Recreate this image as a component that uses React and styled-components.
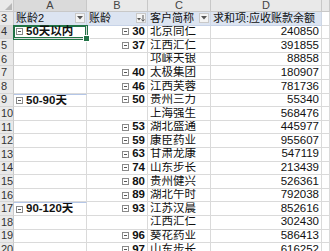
import React from 'react';
import styled, { createGlobalStyle, css } from 'styled-components';

const GlobalStyle = createGlobalStyle`
  html, body {
    margin: 0;
    padding: 0;
    background: #ffffff;
    overflow: hidden;
  }
  body {
    font-family: "Liberation Sans", "Noto Sans CJK SC", sans-serif;
  }
`;

const Sheet = styled.div`
  display: grid;
  grid-template-columns: 14px 73px 61px 63px 111px 1fr;
  grid-template-rows: 12px repeat(18, 13.6px);
  width: 330px;
  height: 251px;
  overflow: hidden;
`;

const Corner = styled.div`
  position: relative;
  background: #e9e9e9;
  border-right: 1px solid #c8c8c8;
  border-bottom: 1px solid #c8c8c8;
  box-sizing: border-box;

  &::after {
    content: '';
    position: absolute;
    right: 1px;
    bottom: 1px;
    border-left: 7px solid transparent;
    border-bottom: 7px solid #b8b8b8;
  }
`;

const ColHead = styled.div`
  display: flex;
  align-items: center;
  justify-content: center;
  background: ${p => (p.$active ? '#dadada' : '#e9e9e9')};
  border-right: 1px solid #c8c8c8;
  border-bottom: 1px solid #c8c8c8;
  box-sizing: border-box;
  font-size: 11px;
  color: #444;
  line-height: 1;
`;

const RowHead = styled.div`
  display: flex;
  align-items: center;
  padding-left: 1px;
  background: ${p => (p.$active ? '#dadada' : '#e9e9e9')};
  border-right: 1px solid #c8c8c8;
  border-bottom: 1px solid #d6d6d6;
  box-sizing: border-box;
  font-size: 11px;
  color: #333;
  line-height: 1;
  overflow: hidden;
`;

const Cell = styled.div`
  position: relative;
  display: flex;
  align-items: center;
  justify-content: ${p => (p.$right ? 'flex-end' : 'flex-start')};
  gap: 2px;
  padding: 0 2px;
  border-right: 1px solid #dadada;
  border-bottom: 1px solid #dadada;
  box-sizing: border-box;
  font-size: 11.5px;
  line-height: 1;
  color: #111;
  white-space: nowrap;
  overflow: hidden;
  font-weight: ${p => (p.$bold ? 700 : 400)};
  ${p => p.$group && css`
    border-top: 1px solid #b4c6e7;
  `}
  ${p => p.$selected && css`
    overflow: visible;
    z-index: 1;
    box-shadow: 0 0 0 1px #217346, inset 0 0 0 1px #217346;
    &::after {
      content: '';
      position: absolute;
      right: -4px;
      bottom: -4px;
      width: 5px;
      height: 5px;
      background: #217346;
      border: 1px solid #fff;
      z-index: 2;
    }
  `}
`;

const HeadCell = styled(Cell)`
  justify-content: space-between;
  background: #dce4f1;
  border-right-color: #cdd6e4;
  border-bottom: 1px solid #c7d3e8;
  padding-right: 1px;
  font-size: 11px;
`;

const Number = styled.span`
  font-size: 11.5px;
`;

const FilterButton = styled.span`
  flex: none;
  display: flex;
  align-items: center;
  justify-content: center;
  width: 10px;
  height: 10px;
  background: #f4f4f4;
  border: 1px solid #c9c9c9;
  box-sizing: border-box;
`;

const Collapse = styled.span`
  flex: none;
  display: flex;
  align-items: center;
  justify-content: center;
  width: 7px;
  height: 7px;
  border: 1px solid #8a8a8a;
  box-sizing: border-box;
  margin-right: 1px;

  &::before {
    content: '';
    width: 3px;
    height: 1px;
    background: #555;
  }
`;

function DropIcon() {
  return (
    <svg width="6" height="4" viewBox="0 0 6 4">
      <path d="M0 0h6L3 3.5z" fill="#555" />
    </svg>
  );
}

function SortIcon() {
  return (
    <svg width="8" height="7" viewBox="0 0 8 7">
      <path d="M0 3h4L2 5.5z" fill="#555" />
      <path d="M6 0v6M4.5 4.5L6 6.3 7.5 4.5" stroke="#555" strokeWidth="1" fill="none" />
    </svg>
  );
}

const rows = [
  { n: 4, a: '50天以内', b: '30', c: '北京同仁', d: '240850' },
  { n: 5, b: '37', c: '江西汇仁', d: '391855' },
  { n: 6, c: '邛崃天银', d: '88858' },
  { n: 7, b: '40', c: '太极集团', d: '180907' },
  { n: 8, b: '46', c: '江西芙蓉', d: '781736' },
  { n: 9, a: '50-90天', b: '50', c: '贵州三力', d: '55340' },
  { n: 10, c: '上海强生', d: '568476' },
  { n: 11, b: '53', c: '湖北盛通', d: '445977' },
  { n: 12, b: '59', c: '康臣药业', d: '955607' },
  { n: 13, b: '63', c: '甘肃龙康', d: '547119' },
  { n: 14, b: '74', c: '山东步长', d: '213439' },
  { n: 15, b: '80', c: '贵州健兴', d: '526361' },
  { n: 16, b: '89', c: '湖北午时', d: '792038' },
  { n: 17, a: '90-120天', b: '93', c: '江苏汉晨', d: '852616' },
  { n: 18, c: '江西汇仁', d: '302430' },
  { n: 19, b: '96', c: '葵花药业', d: '586413' },
  { n: 20, b: '97', c: '山东步长', d: '616252' },
];

export default function App() {
  return (
    <>
      <GlobalStyle />
      <Sheet>
        <Corner />
        <ColHead $active>A</ColHead>
        <ColHead>B</ColHead>
        <ColHead>C</ColHead>
        <ColHead>D</ColHead>
        <ColHead />

        <RowHead>3</RowHead>
        <HeadCell>
          <span>账龄2</span>
          <FilterButton><DropIcon /></FilterButton>
        </HeadCell>
        <HeadCell>
          <span>账龄</span>
          <FilterButton><SortIcon /></FilterButton>
        </HeadCell>
        <HeadCell>
          <span>客户简称</span>
          <FilterButton><DropIcon /></FilterButton>
        </HeadCell>
        <HeadCell>
          <span>求和项:应收账款余额</span>
        </HeadCell>
        <Cell />

        {rows.map(r => (
          <React.Fragment key={r.n}>
            <RowHead $active={r.n === 4}>{r.n}</RowHead>
            <Cell $bold $group={r.a && r.n !== 4} $selected={r.n === 4}>
              {r.a && (
                <>
                  <Collapse />
                  <span>{r.a}</span>
                </>
              )}
            </Cell>
            <Cell $right $bold>
              {r.b && (
                <>
                  <Collapse />
                  <Number>{r.b}</Number>
                </>
              )}
            </Cell>
            <Cell>{r.c}</Cell>
            <Cell $right><Number>{r.d}</Number></Cell>
            <Cell />
          </React.Fragment>
        ))}
      </Sheet>
    </>
  );
}
